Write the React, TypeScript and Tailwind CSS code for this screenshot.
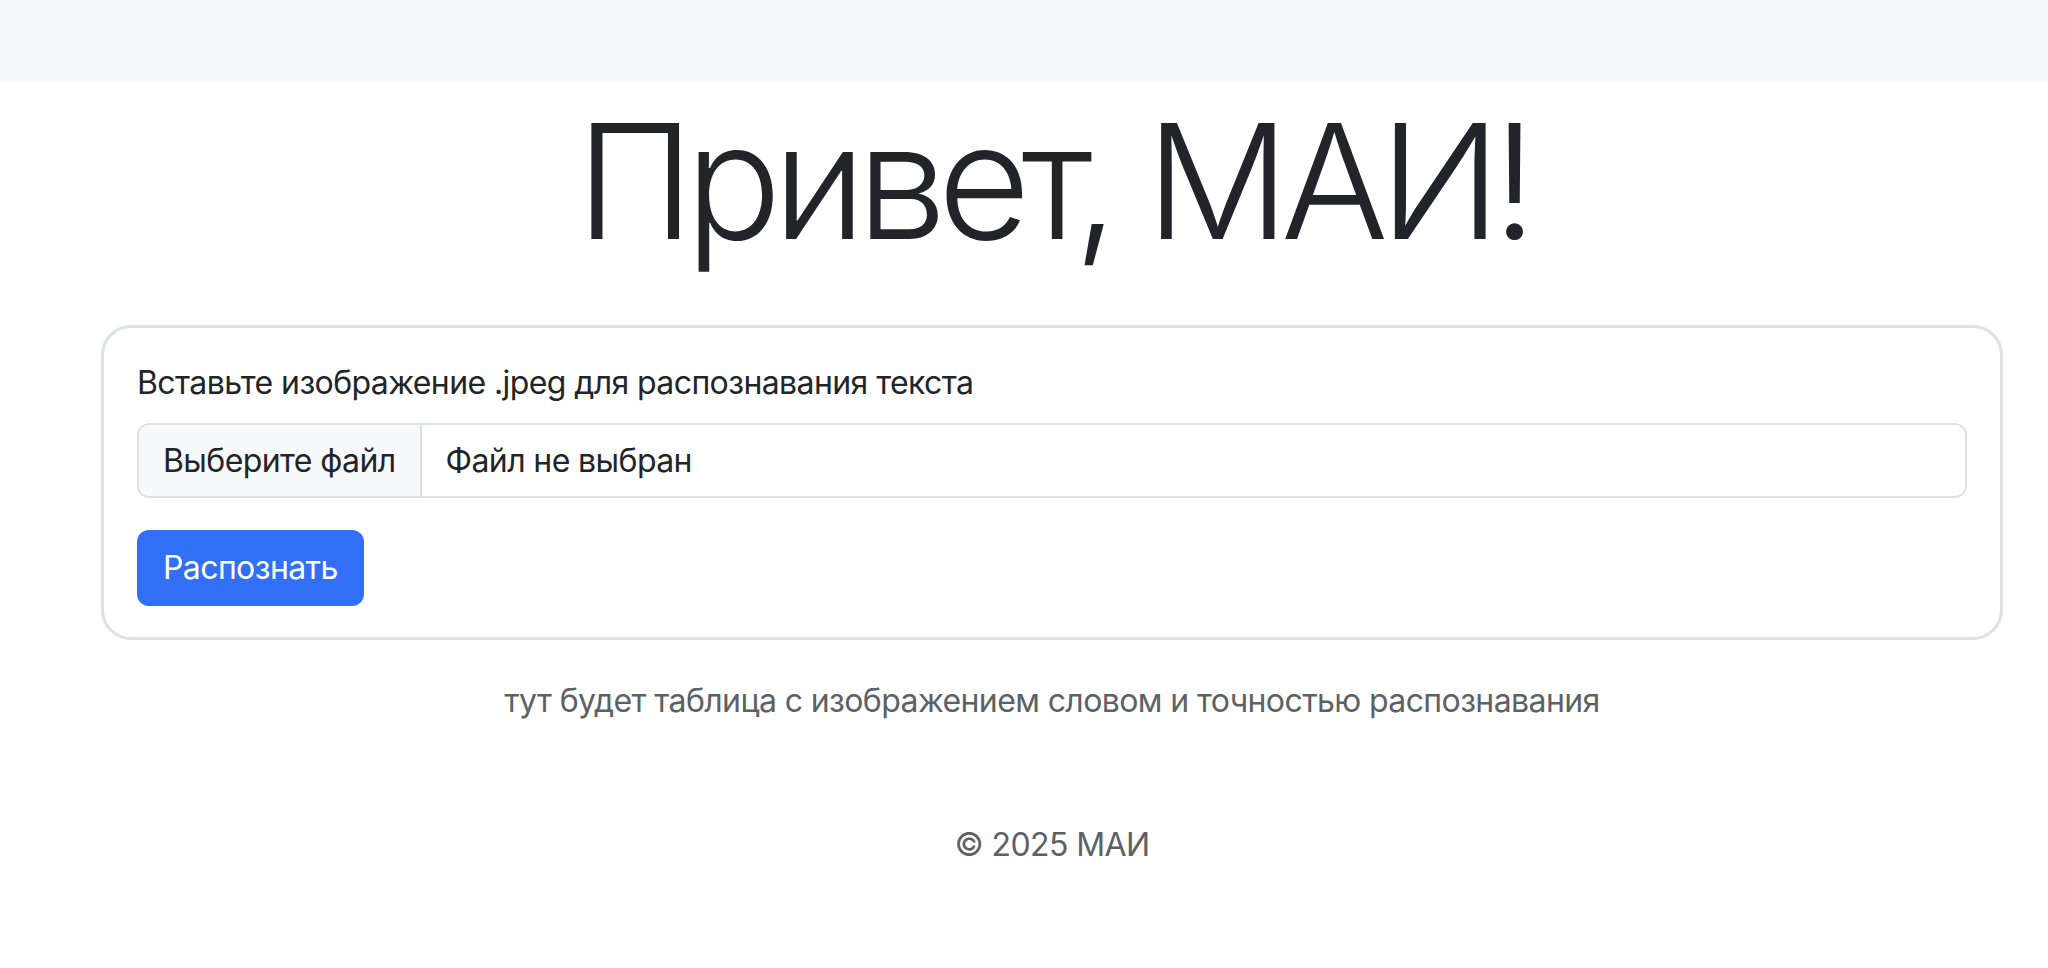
export default function App() {
  return (
    <div className="min-h-[968px] bg-white text-[#212529]" style={{ fontFamily: "Inter, 'Noto Sans', sans-serif" }}>
      {/* Navbar */}
      <nav className="h-[83px] bg-[#f8f9fa]" />

      <main className="pl-[101px] pr-[45px] pt-[2px] tracking-[-0.6px]">
        <h1 className="text-center text-[160px] leading-[192px] font-light tracking-[-9px] mb-[48px]">
          Привет, МАИ!
        </h1>

        {/* Upload card */}
        <div className="border-[3px] border-[#dee2e6] rounded-[30px] px-[33px] py-[31px]">
          <label className="block text-[32px] leading-[48px] mb-[16px]">
            Вставьте изображение .jpeg для распознавания текста
          </label>
          <div className="flex h-[75px] border-2 border-[#dee2e6] rounded-[12px] overflow-hidden text-[32px] leading-[48px]">
            <div className="flex items-center px-[24px] bg-[#f8f9fa] border-r-2 border-[#dee2e6]">
              Выберите файл
            </div>
            <div className="flex items-center px-[24px]">Файл не выбран</div>
          </div>
          <button className="mt-[32px] h-[76px] px-[26px] rounded-[12px] bg-[#316ff6] text-white text-[32px] leading-[48px]">
            Распознать
          </button>
        </div>

        <p className="mt-[37px] text-center text-[32px] leading-[48px] text-[#5c6166]">
          тут будет таблица с изображением словом и точностью распознавания
        </p>

        <footer className="mt-[96px] text-center text-[32px] leading-[48px] text-[#5c6166]">
          © 2025 МАИ
        </footer>
      </main>
    </div>
  );
}
